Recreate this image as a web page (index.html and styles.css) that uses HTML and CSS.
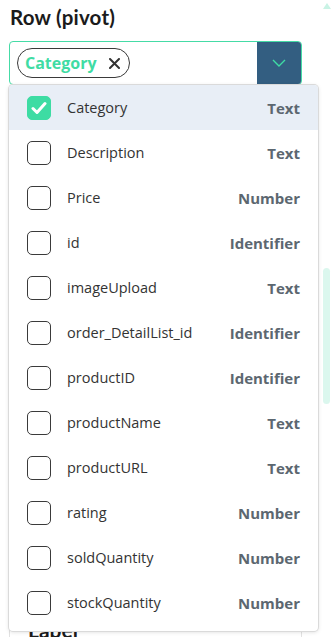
FILE: index.html
```html
<!DOCTYPE html>
<html>
<head>
<meta charset="utf-8">
<link rel="stylesheet" href="styles.css">
</head>
<body>
<div class="page">
  <h2 class="title">Row (pivot)</h2>
  <div class="select-wrap">
    <div class="select">
      <div class="chips">
        <span class="chip">Category
          <svg class="chip-x" width="11" height="11" viewBox="0 0 11 11"><path d="M1 1L10 10M10 1L1 10" stroke="#333" stroke-width="2" stroke-linecap="round"/></svg>
        </span>
      </div>
      <div class="toggle">
        <svg width="14" height="8" viewBox="0 0 14 8"><path d="M1 1L7 7L13 1" fill="none" stroke="#3fdca4" stroke-width="1.4"/></svg>
      </div>
    </div>
    <ul class="menu">
      <li class="item active"><span class="cb checked"><svg width="16" height="14" viewBox="0 0 16 14"><path d="M2 7.5L6 11.5L14 2.5" fill="none" stroke="#fff" stroke-width="3" stroke-linecap="round" stroke-linejoin="round"/></svg></span><span class="name">Category</span><span class="type">Text</span></li>
      <li class="item"><span class="cb"></span><span class="name">Description</span><span class="type">Text</span></li>
      <li class="item"><span class="cb"></span><span class="name">Price</span><span class="type">Number</span></li>
      <li class="item"><span class="cb"></span><span class="name">id</span><span class="type">Identifier</span></li>
      <li class="item"><span class="cb"></span><span class="name">imageUpload</span><span class="type">Text</span></li>
      <li class="item"><span class="cb"></span><span class="name">order_DetailList_id</span><span class="type">Identifier</span></li>
      <li class="item"><span class="cb"></span><span class="name">productID</span><span class="type">Identifier</span></li>
      <li class="item"><span class="cb"></span><span class="name">productName</span><span class="type">Text</span></li>
      <li class="item"><span class="cb"></span><span class="name">productURL</span><span class="type">Text</span></li>
      <li class="item"><span class="cb"></span><span class="name">rating</span><span class="type">Number</span></li>
      <li class="item"><span class="cb"></span><span class="name">soldQuantity</span><span class="type">Number</span></li>
      <li class="item"><span class="cb"></span><span class="name">stockQuantity</span><span class="type">Number</span></li>
    </ul>
  </div>
  <div class="section">
    <div class="section-title">Label</div>
  </div>
</div>
<div class="scrollbar">
  <div class="arrow"></div>
  <div class="thumb"></div>
</div>
</body>
</html>
```
FILE: styles.css
```css
html, body { margin: 0; padding: 0; background: #fff; overflow: hidden; }
body { width: 335px; height: 637px; position: relative; font-family: "Lato", "Open Sans", sans-serif; }
.page { padding: 0 34px 0 9px; }
.title { margin: 0; padding: 5px 0 0 1px; height: 41px; box-sizing: border-box; font-family: "Lato", sans-serif; font-weight: 700; font-size: 20.5px; line-height: 24px; color: #1b1b1b; letter-spacing: 0.2px; }
.select-wrap { position: relative; width: 293px; }
.select { display: flex; height: 44px; box-sizing: border-box; border: 1px solid #45dba6; border-radius: 4px; overflow: hidden; }
.chips { flex: 1; display: flex; align-items: center; padding-left: 7px; }
.chip { display: inline-flex; align-items: center; height: 30px; box-sizing: border-box; border: 1px solid #3a3a3a; border-radius: 15px; padding: 0 9px 0 7px; font-family: "Open Sans", sans-serif; font-weight: 700; font-size: 16px; color: #3fdca4; gap: 12px; }
.chip-x { display: block; }
.toggle { width: 44px; background: #335e81; display: flex; align-items: center; justify-content: center; }
.menu { position: absolute; top: 44px; left: 0; width: 309px; margin: 0; padding: 0 0 6px; list-style: none; background: #fff; border-radius: 4px; box-shadow: 0 0 0 1px #dadada, 0 1px 4px rgba(0,0,0,0.15); z-index: 2; }
.item { display: flex; align-items: center; height: 45px; padding: 0 18px; font-family: "Open Sans", sans-serif; font-size: 14.5px; }
.item.active { background: #e8eef6; border-radius: 4px 4px 0 0; }
.cb { width: 24px; height: 24px; box-sizing: border-box; border: 1px solid #3a3a3a; border-radius: 5px; margin-right: 16px; display: flex; align-items: center; justify-content: center; }
.cb.checked { background: #3ddca3; border-color: #3ddca3; }
.name { flex: 1; color: #333; }
.type { font-family: "Open Sans", sans-serif; font-weight: 700; color: #5c6770; font-size: 15px; }
.section { margin-top: 520px; height: 60px; border: 1px solid #e2e2e2; border-radius: 4px; width: 293px; box-sizing: border-box; padding: 12px 18px 0; }
.section-title { font-family: "Lato", sans-serif; font-weight: 700; font-size: 21px; line-height: 24px; color: #1b1b1b; }
.scrollbar { position: absolute; top: 0; right: 0; width: 15px; height: 637px; }
.arrow { position: absolute; top: 3px; left: 3px; width: 0; height: 0; border-left: 4px solid transparent; border-right: 4px solid transparent; border-bottom: 6px solid #c9f3e5; }
.thumb { position: absolute; top: 268px; left: 3px; width: 7px; height: 136px; border-radius: 4px; background: #dbf7ee; }
```
